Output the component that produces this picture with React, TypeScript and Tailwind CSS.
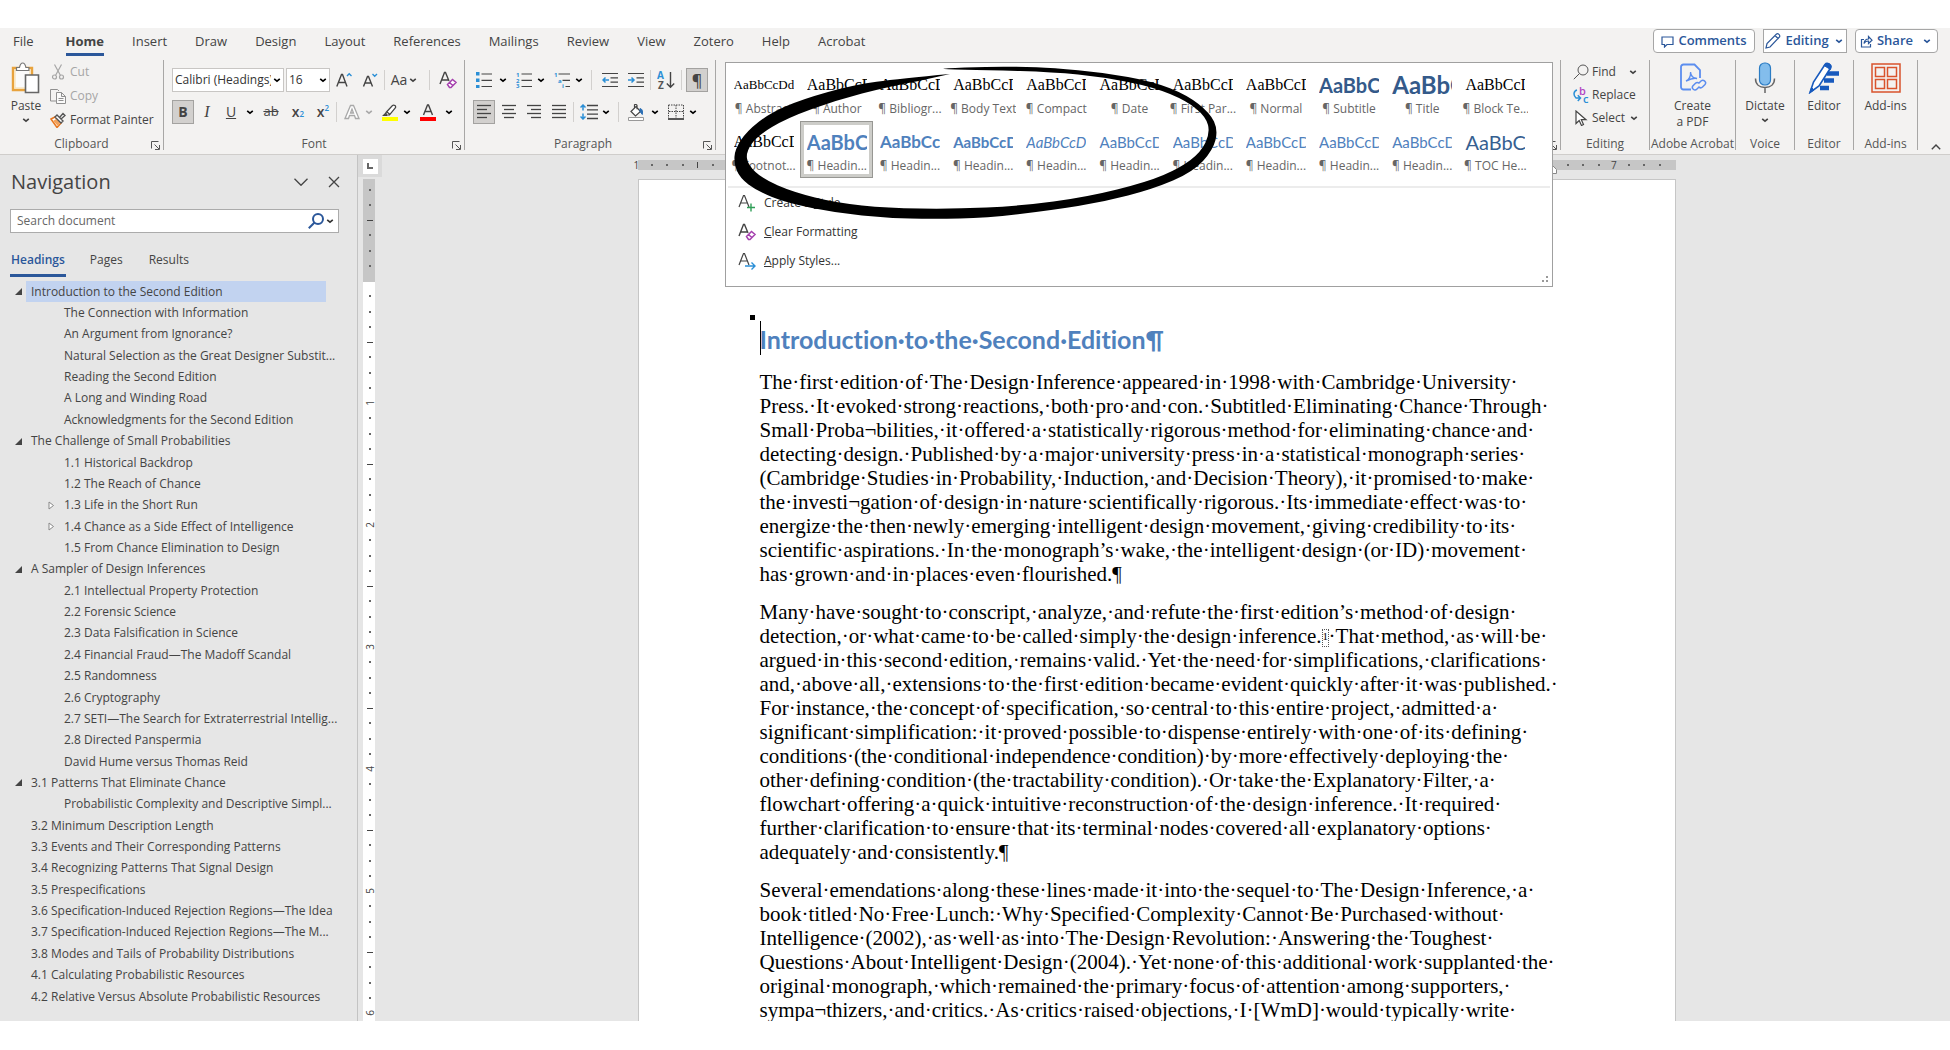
import React from "react";

type IconProps = { className?: string };

function Chevron({ className = "" }: IconProps) {
  return (
    <svg viewBox="0 0 12 12" className={"h-3 w-3 shrink-0 " + className} fill="none" stroke="currentColor" strokeWidth="1.6">
      <path d="M3.2 4.8 6 7.2l2.8-2.4" />
    </svg>
  );
}

function Launcher() {
  return (
    <svg viewBox="0 0 9 9" className="h-[9px] w-[9px]" fill="none" stroke="#555" strokeWidth="1">
      <path d="M.5 7.5v-7h7M3.5 3.5l4.5 4.5M8.5 4v4.5H4" />
    </svg>
  );
}

function Svg({ children, className = "h-4 w-4", box = "0 0 16 16" }: { children: React.ReactNode; className?: string; box?: string }) {
  return (
    <svg viewBox={box} className={"shrink-0 " + className} fill="none" stroke="#444" strokeWidth="1">
      {children}
    </svg>
  );
}

const PasteIcon = () => (
  <Svg box="0 0 30 32" className="h-8 w-[30px]">
    <path d="M2 6h19v22H2z" fill="#fff" stroke="#e8a33d" strokeWidth="2.4" />
    <path d="M4 8h15v18H4z" fill="#fbfbfb" stroke="#f7dca8" />
    <path d="M5.5 8.500V5.500h3C9 3 10 1 11.700 1s2.700 2 3.200 4.500h3v3z" fill="#fff" stroke="#777" strokeWidth="1.200" />
    <path d="M14.500 13h13v17.500h-13z" fill="#fff" stroke="#666" strokeWidth="1.600" />
  </Svg>
);

const CutIcon = () => (
  <Svg>
    <g stroke="#a6a6a6" strokeWidth="1.2">
      <path d="M4.500.5l6 11M11.500.5l-6 11" />
      <circle cx="4.500" cy="13" r="2" />
      <circle cx="11.500" cy="13" r="2" />
    </g>
  </Svg>
);

const CopyIcon = () => (
  <Svg>
    <g stroke="#8f8f8f">
      <path d="M6 13H.5V1.500h7L9 3" />
      <path d="M6.500 4.500h5l4 4v7h-9zM11.500 4.500v4h4M8.500 10.500h5M8.500 12.500h5" fill="#fafafa" />
    </g>
  </Svg>
);

const PainterIcon = () => (
  <Svg>
    <path d="M1 7l4-2 6 6-4 4.500z" fill="#fff" stroke="#e8761e" strokeWidth="1.500" />
    <path d="M3 9l5 5 2-3-4-4z" fill="#f2a25c" stroke="none" />
    <path d="M5 5l2-2 6 6-2 2zM9.500 5.500 13 1.500 15 3.500 11 7" fill="#fff" stroke="#555" strokeWidth="1.400" />
  </Svg>
);

const EraserA = () => (
  <Svg className="h-[18px] w-[18px]" box="0 0 18 18">
    <path d="M1 13 5.500 1.500h1L10 10M2.800 9H9" strokeWidth="1.400" />
    <path d="M8.500 13.500l5-5 3.500 3-5 5h-1.500zM10.500 11.500l3.500 3.300" fill="#fff" stroke="#a540ae" strokeWidth="1.500" />
  </Svg>
);

const Lines = ({ rows }: { rows: [number, number][] }) => (
  <Svg>
    {rows.map(([a, b], i) => (
      <path key={i} d={`M${a} ${1.5 + i * 4}H${b}`} strokeWidth="1.300" />
    ))}
  </Svg>
);

const BulletsIcon = () => (
  <Svg>
    <path d="M0 0h3.500v3.500H0zM0 6.500h3.500V10H0zM0 13h3.500v3H0z" fill="#2b8fd6" stroke="none" />
    <path d="M5.500 2H16M5.500 8.300H16M5.500 14.500H16" strokeWidth="1.200" />
  </Svg>
);

const NumberingIcon = () => (
  <Svg>
    <g fill="#2b8fd6" stroke="none" fontSize="6" fontWeight="700" fontFamily="Open Sans">
      <text x="0" y="5">1</text>
      <text x="0" y="10.500">2</text>
      <text x="0" y="16">3</text>
    </g>
    <path d="M5.500 2H16M5.500 8.300H16M5.500 14.500H16" strokeWidth="1.200" />
  </Svg>
);

const MultilevelIcon = () => (
  <Svg>
    <g fill="#2b8fd6" stroke="none" fontSize="6" fontWeight="700" fontFamily="Open Sans">
      <text x="0" y="5">1</text>
      <text x="4" y="10.500">a</text>
      <text x="8" y="16">i</text>
    </g>
    <path d="M4.500 2H16M8.500 8.300H16M11.500 14.500H16" strokeWidth="1.200" />
  </Svg>
);

const IndentIcon = ({ right }: { right?: boolean }) => (
  <Svg>
    <path d="M0 1.500h16M8.500 5.800H16M8.500 10.200H16M0 14.500h16" strokeWidth="1.200" />
    <path d={right ? "M0 8h6M3.500 5.500 6 8l-2.500 2.500" : "M1 8h6M3.500 5.500 1 8l2.500 2.500"} stroke="#2b8fd6" strokeWidth="1.500" />
  </Svg>
);

const SortIcon = () => (
  <Svg className="h-[18px] w-[18px]" box="0 0 18 18">
    <g stroke="none" fontSize="10" fontWeight="700" fontFamily="Open Sans">
      <text x="0" y="8" fill="#2b8fd6">A</text>
      <text x="1" y="17.500" fill="#555">Z</text>
    </g>
    <path d="M13.500 1v15M9.800 12.500l3.700 3.700 3.700-3.700" strokeWidth="1.400" />
  </Svg>
);

const SpacingIcon = () => (
  <Svg className="h-4 w-[18px]" box="0 0 18 16">
    <path d="M7 1.500h11M7 5.800h11M7 10.200h11M7 14.500h11" strokeWidth="1.300" />
    <path d="M3 1v5.500M.5 3.500 3 1l2.500 2.500M3 9.500V15M.5 12.500 3 15l2.500-2.500" stroke="#2b8fd6" strokeWidth="1.500" />
  </Svg>
);

const ShadingIcon = () => (
  <Svg className="h-[17px] w-4" box="0 0 16 17">
    <path d="M3 7.500 8 2.500l4.500 5L7.500 12zM6.500 4V.8c1-.6 2-.4 2.500.5v4" fill="#fff" strokeWidth="1.200" />
    <path d="M12 4.500c2 .5 3 2 2.300 6l-2.300-3z" fill="#2b6fb5" stroke="#2b6fb5" />
    <path d="M.5 13.500h15v3H.5z" fill="#fff" stroke="#999" />
  </Svg>
);

const BordersIcon = () => (
  <Svg>
    <path d="M.5 1h15M.5 1v13M15.500 1v13M8 1v13M1 7.500h14" strokeDasharray="1.500 1" />
    <path d="M0 15h16" strokeWidth="1.800" />
  </Svg>
);

const HighlightIcon = () => (
  <Svg className="h-[17px] w-4" box="0 0 16 17">
    <path d="M4 8.500 10.500 1.500c1.500-1.300 4 .6 2.800 2.500L7.500 11H4zM5 8l3 2.500M4 9l-2.500 2.500h3z" fill="#fff" strokeWidth="1.200" />
    <path d="M0 13h16v4H0z" fill="#ff0" stroke="none" />
  </Svg>
);

const FontColorIcon = () => (
  <Svg className="h-[17px] w-4" box="0 0 16 17">
    <path d="M3.500 11 7.500 1h1l4 10M5 7.500h6" strokeWidth="1.400" />
    <path d="M0 13h16v4H0z" fill="#f00" stroke="none" />
  </Svg>
);

const OutlineA = () => (
  <Svg>
    <path d="M1 14.500 6.500 1.500h3l5.500 13h-3.500L10.500 11.500h-5L4.500 14.500zM6.500 9h3L8 5z" fill="#fff" stroke="#a9a9a9" strokeWidth="1.300" />
  </Svg>
);

const SearchIcon = ({ className = "" }: IconProps) => (
  <svg viewBox="0 0 16 16" className={"h-4 w-4 shrink-0 " + className} fill="none" stroke="currentColor">
    <circle cx="10" cy="6" r="5" />
    <path d="M6.500 9.500.8 15.200" />
  </svg>
);

const ReplaceIcon = () => (
  <Svg>
    <g stroke="none" fontSize="11" fontWeight="600" fontFamily="Open Sans">
      <text x="6" y="8" fill="#b146c2">b</text>
      <text x="10" y="16" fill="#2b8fd6">c</text>
    </g>
    <path d="M4 3C.5 4 0 8.500 3 11h4M4.800 8.300 7.500 11l-2.700 3" stroke="#2b8fd6" strokeWidth="1.500" />
  </Svg>
);

const SelectIcon = () => (
  <Svg>
    <path d="M3 1v12.500l3.200-3 2.300 5 2-1-2.200-4.800H13z" fill="#fff" strokeWidth="1.200" />
  </Svg>
);

const PdfIcon = () => (
  <Svg box="0 0 28 30" className="h-[30px] w-7">
    <g stroke="#5b8def" strokeWidth="1.800">
      <path d="M12 26.500H4.500c-1.500 0-2.500-1-2.500-2.500V4c0-1.500 1-2.500 2.500-2.500h11L21 7v8" />
      <path d="M7 18c3-1 5-5 4.500-9 0 4 3 6.500 6.500 6.500-4-1-7 .5-11 2.500z" strokeWidth="1.400" />
      <path d="M19.500 20.500l2.500-2.500c2.500-2 6 1 4 3.500L23.500 24c-1 1-2.500 1-3.500.2M20.500 23.500 18 26c-2.500 2.500-6-.8-4-3.200l2.500-2.500c1-1 2.500-1 3.500 0" strokeWidth="1.500" />
    </g>
  </Svg>
);

const MicIcon = () => (
  <Svg box="0 0 22 32" className="h-8 w-[22px]">
    <rect x="5.500" y="1" width="11" height="22" rx="5" fill="#83bdec" stroke="#2b7cc4" strokeWidth="1.200" />
    <path d="M1.500 16.500c0 6 4 9 9.500 9s9.500-3 9.500-9M11 25.500V31" stroke="#666" strokeWidth="1.500" />
  </Svg>
);

const EditorIcon = () => (
  <Svg box="0 0 32 32" className="h-8 w-8">
    <path d="M19 11.500h12M16 18.500h10M12 26h9" stroke="#185abd" strokeWidth="4.500" />
    <path d="M2 30.500 5.500 20 17 2.500c2-2.500 7 0 5.500 3.500L11 24z" fill="#fff" stroke="#185abd" strokeWidth="1.600" />
    <path d="M16 3.500l6.500 4 .6-3.500c-1-3-5-3.500-7.100-.5zM2 30.500l1.500-5 2.500 2.500z" fill="#185abd" stroke="#185abd" />
  </Svg>
);

const AddinsIcon = () => (
  <Svg box="0 0 30 30" className="h-[30px] w-[30px]">
    <g stroke="#d9532c" strokeWidth="1.500">
      <path d="M1 1h28v28H1zM4.500 4.500h9v9h-9zM16.500 4.500h9v9h-9zM4.500 16.500h9v9h-9zM16.500 16.500h9v9h-9z" />
    </g>
  </Svg>
);

function Tool({ label, className = "w-[26px]", active, children }: { label: string; className?: string; active?: boolean; children: React.ReactNode }) {
  return (
    <button
      aria-label={label}
      className={
        "flex h-6 shrink-0 items-center justify-center text-[#444] " +
        (active ? "border border-[#a3a2a0] bg-[#d2d0ce] " : "") +
        className
      }
    >
      {children}
    </button>
  );
}

const Sep = ({ className = "" }: IconProps) => <span className={"h-5 w-px shrink-0 bg-[#d2d0ce] " + className} />;

function Group({ name, className, launcher, children }: { name: string; className: string; launcher?: boolean; children: React.ReactNode }) {
  return (
    <section aria-label={name} className={"relative flex h-[90px] shrink-0 flex-col border-r border-[#a8a7a6] " + className}>
      <div className="flex-1">{children}</div>
      <div className="-mb-0.5 flex h-4 items-center justify-center text-xs leading-4 whitespace-nowrap text-[#555]">{name}</div>
      {launcher && (
        <button aria-label={name + " settings"} className="absolute right-[3px] bottom-0">
          <Launcher />
        </button>
      )}
    </section>
  );
}

function BigButton({ icon, label, chevron, className = "" }: { icon: React.ReactNode; label: string; chevron?: boolean; className?: string }) {
  return (
    <button className={"flex flex-col items-center text-xs leading-4 text-[#444] " + className}>
      <span className="flex h-9 items-center">{icon}</span>
      <span className="mt-0.5 whitespace-pre-line">{label}</span>
      {chevron && <Chevron />}
    </button>
  );
}

const tabs = ["File", "Home", "Insert", "Draw", "Design", "Layout", "References", "Mailings", "Review", "View", "Zotero", "Help", "Acrobat"];

const serif = "font-['Liberation_Serif',serif] text-base text-black";
const blue = "font-['Lato',sans-serif] text-[#4f81bd] ";
const styleCells: { name: string; look: string; active?: boolean }[] = [
  { name: "Abstract", look: "font-['Liberation_Serif',serif] text-[13px] text-black" },
  { name: "Author", look: serif },
  { name: "Bibliogr...", look: serif },
  { name: "Body Text", look: serif },
  { name: "Compact", look: serif },
  { name: "Date", look: serif },
  { name: "First Par...", look: serif },
  { name: "Normal", look: serif },
  { name: "Subtitle", look: "font-['Lato',sans-serif] text-xl font-bold text-[#345a8a]" },
  { name: "Title", look: "font-['Lato',sans-serif] text-2xl font-bold text-[#345a8a]" },
  { name: "Block Te...", look: serif },
  { name: "Footnot...", look: serif },
  { name: "Headin...", look: blue + "text-xl font-bold", active: true },
  { name: "Headin...", look: blue + "text-[17px] font-bold" },
  { name: "Headin...", look: blue + "text-[15px] font-bold" },
  { name: "Headin...", look: blue + "text-[15px] italic" },
  { name: "Headin...", look: blue + "text-[15px]" },
  { name: "Headin...", look: blue + "text-[15px]" },
  { name: "Headin...", look: blue + "text-[15px]" },
  { name: "Headin...", look: blue + "text-[15px]" },
  { name: "Headin...", look: blue + "text-[15px]" },
  { name: "TOC He...", look: "font-['Lato',sans-serif] text-xl text-[#365f91]" },
];

type Pt = [number, number];
const loop: Pt[] = [
  [950, 74], [900, 78.5], [853, 85], [803, 99], [770, 113], [747, 131], [735, 149], [734, 164], [740, 178], [757, 191],
  [787, 203], [837, 213], [887, 218], [933, 219], [987, 218], [1053, 210], [1103, 202], [1153, 189], [1193, 172], [1213, 150],
  [1218, 130], [1210, 113], [1187, 95], [1153, 81.5], [1103, 72.5], [1053, 68], [1020, 66.7], [987, 66.7], [943, 68.3], [943, 69.3],
  [987, 70], [1053, 72], [1103, 77], [1153, 87], [1187, 101], [1206, 117], [1210, 133], [1201, 152], [1180, 168], [1147, 182],
  [1087, 197], [1020, 206], [953, 209], [887, 208], [837, 203], [793, 192], [763, 179], [748, 165], [746, 152], [757, 136],
  [787, 118], [837, 100], [887, 87], [950, 75],
];

function smooth(points: Pt[]) {
  let d = `M${points[0][0]} ${points[0][1]}`;
  for (let i = 1; i < points.length - 1; i++) {
    const [x, y] = points[i];
    const [nx, ny] = points[i + 1];
    d += ` Q${x} ${y} ${(x + nx) / 2} ${(y + ny) / 2}`;
  }
  return d + "Z";
}

function StylesMenu() {
  return (
    <div className="absolute top-0.5 right-[7px] left-[9px] z-10 h-[225px] border border-[#a0a0a0] bg-white">
      <div className="grid grid-cols-11 pt-px pr-5 pl-px">
        {styleCells.map((s, i) => (
          <button
            key={i}
            className={
              "flex h-[57px] flex-col items-center overflow-hidden " +
              (s.active ? "border border-[#979793] outline-[3px] -outline-offset-4 outline-[#cdcdc9]" : "border border-transparent")
            }
          >
            <span className={"mt-1 flex h-8 w-[60px] items-center overflow-hidden whitespace-nowrap " + s.look}>AaBbCcDd</span>
            <span className="w-[66px] overflow-hidden text-center text-xs leading-4 whitespace-nowrap text-[#666]">¶ {s.name}</span>
          </button>
        ))}
      </div>
      <div className="mx-0.5 mt-2 h-0.5 bg-[#ececec]" />
      <div className="flex flex-col pl-3 text-xs text-[#333]">
        <button className="flex h-[29px] items-center gap-2">
          <Svg box="0 0 18 18" className="h-[18px] w-[18px]">
            <path d="M1 13 5.500 1.500h1L11 13M2.800 9H9" strokeWidth="1.200" />
            <path d="M13 9.500v8M9 13.500h8" stroke="#2f9e57" strokeWidth="1.400" />
          </Svg>
          <span>Create a <u>S</u>tyle</span>
        </button>
        <button className="flex h-[29px] items-center gap-2">
          <EraserA />
          <span><u>C</u>lear Formatting</span>
        </button>
        <button className="flex h-[29px] items-center gap-2">
          <Svg box="0 0 18 18" className="h-[18px] w-[18px]">
            <path d="M1 13 5.500 1.500h1L11 13M2.800 9H9" strokeWidth="1.200" />
            <path d="M7 14h10M13.500 10.500 17 14l-3.500 3.500" stroke="#2b8fd6" strokeWidth="1.400" />
          </Svg>
          <span><u>A</u>pply Styles...</span>
        </button>
      </div>
      <svg viewBox="0 0 6 6" className="absolute right-1 bottom-1 h-1.5 w-1.5" fill="#999">
        <path d="M4 0h2v2H4zM4 4h2v2H4zM0 4h2v2H0z" />
      </svg>
      <svg viewBox="726 63 500 160" className="pointer-events-none absolute top-0 left-0 h-40 w-[500px]" fill="#000">
        <path d={smooth(loop)} />
      </svg>
    </div>
  );
}

function Ribbon() {
  return (
    <header className="border-b border-[#cfcdcb] bg-[#f3f2f1]">
      <div className="flex h-8 items-start justify-between pr-3 pl-[13px]">
        <nav className="flex gap-7 pt-px text-[13px] leading-6 text-[#444]">
          {tabs.map((t) => (
            <a key={t} href="#" className={t === "Home" ? "ml-1 border-b-3 border-[#2b579a] font-bold" : ""}>
              {t}
            </a>
          ))}
        </nav>
        <div className="flex gap-2 pt-px text-[13px] font-semibold text-[#2b579a]">
          <button className="flex h-6 w-[102px] items-center justify-center gap-1 rounded border border-[#a6a6a6] bg-white">
            <svg viewBox="0 0 13 13" className="h-[13px] w-[13px]" fill="none" stroke="currentColor" strokeWidth="1.200">
              <path d="M1 2h11v7.500H6L3.500 12V9.500H1z" />
            </svg>
            Comments
          </button>
          <button className="flex h-6 w-[84px] items-center justify-center gap-1 border border-[#a6a6a6] bg-white">
            <svg viewBox="0 0 16 16" className="h-4 w-4" fill="none" stroke="currentColor" strokeWidth="1.200">
              <path d="M1 15l1-4.500L11.500 1c1.500-1 4 1 3 3L5 14zM10 2.500l3.500 3.500" />
            </svg>
            Editing
            <Chevron />
          </button>
          <button className="flex h-6 w-[83px] items-center justify-center gap-1 rounded border border-[#a6a6a6] bg-white">
            <svg viewBox="0 0 13 13" className="h-[13px] w-[13px]" fill="none" stroke="currentColor" strokeWidth="1.200">
              <path d="M4 4.500H1.500v7.500h9V9M4 8.500C4.500 5 6 4 8.500 4V1.500L12 5.200 8.500 8.500V6C6.500 6 5 6.500 4 8.500z" />
            </svg>
            Share
            <Chevron className="ml-1" />
          </button>
        </div>
      </div>

      <div className="flex pb-1">
        <Group name="Clipboard" className="w-[164px]" launcher>
          <div className="flex pl-2.5">
            <BigButton icon={<PasteIcon />} label="Paste" chevron className="w-8" />
            <div className="flex flex-col pl-2 text-xs text-[#444]">
              <button className="flex h-6 items-center gap-1 text-[#a6a6a6]"><CutIcon />Cut</button>
              <button className="flex h-6 items-center gap-1 text-[#a6a6a6]"><CopyIcon />Copy</button>
              <button className="flex h-6 items-center gap-1 whitespace-nowrap"><PainterIcon />Format Painter</button>
            </div>
          </div>
        </Group>

        <Group name="Font" className="w-[301px]" launcher>
          <div className="flex items-center gap-0.5 pt-2 pl-2">
            <label className="relative flex h-6 w-28 shrink-0 items-center border border-[#c8c6c4] bg-white">
              <select aria-label="Font name" className="w-[98px] appearance-none overflow-hidden pl-0.5 text-xs text-[#333] outline-none">
                <option>Calibri (Headings)</option>
              </select>
              <Chevron className="absolute right-0" />
            </label>
            <label className="relative flex h-6 w-11 shrink-0 items-center border border-[#c8c6c4] bg-white">
              <select aria-label="Font size" className="w-7 appearance-none pl-0.5 text-xs text-[#333] outline-none">
                <option>16</option>
              </select>
              <Chevron className="absolute right-0" />
            </label>
            <Tool label="Grow font" className="w-6">
              <Svg>
                <path d="M.8 14.500 5.500 2.500h1L11 14.500M2.500 10.500H9.500" strokeWidth="1.400" />
                <path d="M11 4l2.200-2.200L15.500 4" stroke="#2b8fd6" strokeWidth="1.400" />
              </Svg>
            </Tool>
            <Tool label="Shrink font" className="w-6">
              <Svg>
                <path d="M1.500 14.500 5.500 4.500h1l4 10M3 11h6" strokeWidth="1.400" />
                <path d="M10.500 2l2.200 2.200L15 2" stroke="#2b8fd6" strokeWidth="1.400" />
              </Svg>
            </Tool>
            <Sep />
            <Tool label="Change case" className="w-9 text-sm">Aa<Chevron /></Tool>
            <Sep className="mx-1" />
            <Tool label="Clear formatting" className="w-6"><EraserA /></Tool>
          </div>
          <div className="flex items-center gap-0.5 pt-2 pl-2">
            <Tool label="Bold" active className="w-[22px] text-sm font-bold">B</Tool>
            <Tool label="Italic" className="w-[22px] font-['Liberation_Serif',serif] text-base italic">I</Tool>
            <Tool label="Underline" className="w-[22px] text-sm underline">U</Tool>
            <Chevron />
            <Tool label="Strikethrough" className="w-[26px] text-[13px] line-through">ab</Tool>
            <Tool label="Subscript" className="w-6 text-sm font-semibold">x<sub className="text-[8px] text-[#2b8fd6]">2</sub></Tool>
            <Tool label="Superscript" className="w-[22px] text-sm font-semibold">x<sup className="text-[8px] text-[#2b8fd6]">2</sup></Tool>
            <Sep />
            <Tool label="Text effects"><OutlineA /></Tool>
            <Chevron className="-ml-1 text-[#a9a9a9]" />
            <Tool label="Highlight"><HighlightIcon /></Tool>
            <Chevron className="-ml-1" />
            <Tool label="Font color"><FontColorIcon /></Tool>
            <Chevron />
          </div>
        </Group>

        <Group name="Paragraph" className="w-[251px] pr-3.5" launcher>
          <div className="flex items-center gap-0.5 pt-2 pl-2">
            <Tool label="Bullets" className="w-[22px]"><BulletsIcon /></Tool>
            <Chevron />
            <Tool label="Numbering"><NumberingIcon /></Tool>
            <Chevron className="-ml-1" />
            <Tool label="Multilevel list"><MultilevelIcon /></Tool>
            <Chevron className="-ml-1" />
            <Sep className="mx-1" />
            <Tool label="Decrease indent" className="w-6"><IndentIcon /></Tool>
            <Tool label="Increase indent" className="w-6"><IndentIcon right /></Tool>
            <Sep />
            <Tool label="Sort"><SortIcon /></Tool>
            <Sep className="mr-0.5" />
            <Tool label="Show marks" active className="w-[22px] text-base font-semibold">¶</Tool>
          </div>
          <div className="flex items-center gap-0.5 pt-2 pl-2">
            <Tool label="Align left" active className="w-[22px]"><Lines rows={[[1, 15], [1, 11], [1, 15], [1, 11]]} /></Tool>
            <Tool label="Center" className="w-6"><Lines rows={[[1, 15], [3, 13], [1, 15], [3, 13]]} /></Tool>
            <Tool label="Align right" className="w-[22px]"><Lines rows={[[1, 15], [5, 15], [1, 15], [5, 15]]} /></Tool>
            <Tool label="Justify" className="w-6"><Lines rows={[[1, 15], [1, 15], [1, 15], [1, 15]]} /></Tool>
            <Sep />
            <Tool label="Line spacing"><SpacingIcon /></Tool>
            <Chevron className="-ml-1" />
            <Sep className="mx-1" />
            <Tool label="Shading" className="w-[22px]"><ShadingIcon /></Tool>
            <Chevron />
            <Tool label="Borders"><BordersIcon /></Tool>
            <Chevron className="-ml-1" />
          </div>
        </Group>

        <section aria-label="Styles" className="relative min-w-0 flex-1 border-r border-[#a8a7a6]">
          <StylesMenu />
          <button aria-label="Styles settings" className="absolute right-[3px] bottom-0"><Launcher /></button>
        </section>

        <Group name="Editing" className="w-[89px]">
          <div className="flex flex-col pl-3 text-xs text-[#444]">
            <button className="flex h-[23px] items-center gap-[3px]"><SearchIcon className="text-[#555]" />Find<Chevron className="ml-2" /></button>
            <button className="flex h-[23px] items-center gap-[3px]"><ReplaceIcon />Replace</button>
            <button className="flex h-[23px] items-center gap-[3px]"><SelectIcon />Select<Chevron /></button>
          </div>
        </Group>
        <Group name="Adobe Acrobat" className="w-[86px]">
          <BigButton icon={<PdfIcon />} label={"Create\na PDF"} className="w-full" />
        </Group>
        <Group name="Voice" className="w-[59px]">
          <BigButton icon={<MicIcon />} label="Dictate" chevron className="w-full" />
        </Group>
        <Group name="Editor" className="w-[59px]">
          <BigButton icon={<EditorIcon />} label="Editor" className="w-full" />
        </Group>
        <Group name="Add-ins" className="w-16">
          <BigButton icon={<AddinsIcon />} label="Add-ins" className="w-full" />
        </Group>
        <div className="flex w-8 shrink-0 items-end justify-center pl-1">
          <button aria-label="Collapse ribbon">
            <svg viewBox="0 0 10 6" className="h-1.5 w-2.5" fill="none" stroke="#444" strokeWidth="1.400"><path d="M.8 5.200 5 1l4.200 4.200" /></svg>
          </button>
        </div>
      </div>
    </header>
  );
}

type Item = [level: 1 | 2, text: string, mark?: "open" | "closed"];
const outline: Item[] = [
  [1, "Introduction to the Second Edition", "open"],
  [2, "The Connection with Information"],
  [2, "An Argument from Ignorance?"],
  [2, "Natural Selection as the Great Designer Substit..."],
  [2, "Reading the Second Edition"],
  [2, "A Long and Winding Road"],
  [2, "Acknowledgments for the Second Edition"],
  [1, "The Challenge of Small Probabilities", "open"],
  [2, "1.1 Historical Backdrop"],
  [2, "1.2 The Reach of Chance"],
  [2, "1.3 Life in the Short Run", "closed"],
  [2, "1.4 Chance as a Side Effect of Intelligence", "closed"],
  [2, "1.5 From Chance Elimination to Design"],
  [1, "A Sampler of Design Inferences", "open"],
  [2, "2.1 Intellectual Property Protection"],
  [2, "2.2 Forensic Science"],
  [2, "2.3 Data Falsification in Science"],
  [2, "2.4 Financial Fraud—The Madoff Scandal"],
  [2, "2.5 Randomness"],
  [2, "2.6 Cryptography"],
  [2, "2.7 SETI—The Search for Extraterrestrial Intellig..."],
  [2, "2.8 Directed Panspermia"],
  [2, "David Hume versus Thomas Reid"],
  [1, "3.1 Patterns That Eliminate Chance", "open"],
  [2, "Probabilistic Complexity and Descriptive Simpl..."],
  [1, "3.2 Minimum Description Length"],
  [1, "3.3 Events and Their Corresponding Patterns"],
  [1, "3.4 Recognizing Patterns That Signal Design"],
  [1, "3.5 Prespecifications"],
  [1, "3.6 Specification-Induced Rejection Regions—The Idea"],
  [1, "3.7 Specification-Induced Rejection Regions—The M..."],
  [1, "3.8 Modes and Tails of Probability Distributions"],
  [1, "4.1 Calculating Probabilistic Resources"],
  [1, "4.2 Relative Versus Absolute Probabilistic Resources"],
];

function Navigation() {
  return (
    <aside className="flex w-[358px] shrink-0 flex-col border-r border-[#c3c3c3] pb-3.5 text-[#444]">
      <div className="flex items-center justify-between pt-[11px] pr-[17px] pl-[11px]">
        <h2 className="text-xl leading-8">Navigation</h2>
        <div className="flex items-center gap-5">
          <button aria-label="Pane options">
            <svg viewBox="0 0 14 8" className="h-2 w-3.5" fill="none" stroke="#444" strokeWidth="1.300"><path d="M.5.8 7 7.300 13.500.8" /></svg>
          </button>
          <button aria-label="Close pane">
            <svg viewBox="0 0 12 12" className="h-3 w-3" fill="none" stroke="#444" strokeWidth="1.300"><path d="M1 1l10 10M11 1 1 11" /></svg>
          </button>
        </div>
      </div>
      <div className="mt-[11px] mr-[18px] ml-2.5 flex h-6 items-center border border-[#ababab] bg-white pr-0.5">
        <input aria-label="Search document" placeholder="Search document" className="min-w-0 flex-1 px-1.5 text-xs outline-none placeholder:text-[#666]" />
        <button aria-label="Search" className="flex items-center text-[#2b579a]">
          <SearchIcon className="stroke-2" />
          <Chevron className="text-[#333]" />
        </button>
      </div>
      <div className="mt-[17px] flex gap-6 pl-2.5 text-xs leading-5">
        <button className="border-b-3 border-[#2b579a] px-px pb-1 font-semibold text-[#2b579a]">Headings</button>
        <button className="pb-[7px]">Pages</button>
        <button className="pb-[7px] pl-0.5">Results</button>
      </div>
      <ul className="mt-1 flex min-h-0 flex-1 flex-col text-xs whitespace-nowrap">
        {outline.map(([level, text, mark], i) => (
          <li key={i} className="flex flex-1 items-stretch pr-[31px]">
            <span className={"flex shrink-0 items-center " + (level === 1 ? "w-[26px] pl-[15px]" : "w-[59px] pl-12")}>
              {mark === "open" && <svg viewBox="0 0 7 7" className="h-[7px] w-[7px]" fill="#444"><path d="M7 0v7H0z" /></svg>}
              {mark === "closed" && <svg viewBox="0 0 7 9" className="h-[9px] w-[7px]" fill="#fff" stroke="#888"><path d="M1 1l4.500 3.500L1 8z" /></svg>}
            </span>
            <a href="#" className={"flex min-w-0 flex-1 items-center pl-[5px] " + (i === 0 ? "bg-[#c2d3f0]" : "")}>{text}</a>
          </li>
        ))}
      </ul>
    </aside>
  );
}

const Mark = ({ n, vertical }: { n: number; vertical?: boolean }) => {
  if (n === 0) return null;
  if (n % 8 === 0) return <span className={"text-[10px] leading-none " + (vertical ? "-rotate-90" : "")}>{Math.abs(n / 8)}</span>;
  if (n % 4 === 0) return <span className={vertical ? "h-px w-1.5 bg-[#444]" : "h-1.5 w-px bg-[#444]"} />;
  return <span className="h-0.5 w-0.5 bg-[#666]" />;
};

function VerticalRuler() {
  return (
    <div className="flex w-6 shrink-0 flex-col text-[#444]">
      <div className="flex h-[22px] w-6 items-center justify-center bg-[#dadada]">
        <span className="flex h-[15px] w-[15px] items-center justify-center bg-white">
          <span className="h-1.5 w-1.5 border-b-2 border-l-2 border-[#666]" />
        </span>
      </div>
      <div className="mt-0.5 ml-[5px] flex w-3 flex-1 flex-col bg-[linear-gradient(#c6c6c6_0_103px,#fff_103px)] pt-[3px] pl-0.5">
        {Array.from({ length: 55 }, (_, i) => (
          <span key={i} className="flex min-h-0 flex-1 items-center justify-center">
            <Mark n={i - 6} vertical />
          </span>
        ))}
      </div>
    </div>
  );
}

const paragraphs: string[][] = [
  [
    "The first edition of The Design Inference appeared in 1998 with Cambridge University ",
    "Press. It evoked strong reactions, both pro and con. Subtitled Eliminating Chance Through ",
    "Small Proba¬bilities, it offered a statistically rigorous method for eliminating chance and ",
    "detecting design. Published by a major university press in a statistical monograph series ",
    "(Cambridge Studies in Probability, Induction, and Decision Theory), it promised to make ",
    "the investi¬gation of design in nature scientifically rigorous. Its immediate effect was to ",
    "energize the then newly emerging intelligent design movement, giving credibility to its ",
    "scientific aspirations. In the monograph’s wake, the intelligent design (or ID) movement ",
    "has grown and in places even flourished.¶",
  ],
  [
    "Many have sought to conscript, analyze, and refute the first edition’s method of design ",
    "detection, or what came to be called simply the design inference.^ That method, as will be ",
    "argued in this second edition, remains valid. Yet the need for simplifications, clarifications ",
    "and, above all, extensions to the first edition became evident quickly after it was published. ",
    "For instance, the concept of specification, so central to this entire project, admitted a ",
    "significant simplification: it proved possible to dispense entirely with one of its defining ",
    "conditions (the conditional independence condition) by more effectively deploying the ",
    "other defining condition (the tractability condition). Or take the Explanatory Filter, a ",
    "flowchart offering a quick intuitive reconstruction of the design inference. It required ",
    "further clarification to ensure that its terminal nodes covered all explanatory options ",
    "adequately and consistently.¶",
  ],
  [
    "Several emendations along these lines made it into the sequel to The Design Inference, a ",
    "book titled No Free Lunch: Why Specified Complexity Cannot Be Purchased without ",
    "Intelligence (2002), as well as into The Design Revolution: Answering the Toughest ",
    "Questions About Intelligent Design (2004). Yet none of this additional work supplanted the ",
    "original monograph, which remained the primary focus of attention among supporters, ",
    "sympa¬thizers, and critics. As critics raised objections, I [WmD] would typically write ",
  ],
];

const dotted = (s: string) => s.replace(/ /g, "·");

function Line({ text }: { text: string }) {
  const [before, after] = text.split("^");
  return (
    <span className="block h-6 whitespace-nowrap">
      {dotted(before)}
      {after !== undefined && (
        <>
          <span className="inline-block h-[18px] w-[7px] border border-dotted border-[#555] text-center align-middle text-[11px] leading-3">1</span>
          {dotted(after)}
        </>
      )}
    </span>
  );
}

function Document() {
  return (
    <main className="flex min-w-0 flex-1 flex-col items-center overflow-hidden pr-[19px]">
      <div className="mt-[5px] flex h-2.5 w-[1038px] shrink-0 bg-[linear-gradient(90deg,#c6c6c6_0_123px,#fff_123px_915px,#c6c6c6_915px)] pr-2 text-[#444]">
        <span className="-ml-1 flex w-[11px] items-center text-[10px] leading-none">1</span>
        {Array.from({ length: 67 }, (_, i) => (
          <span key={i} className="flex min-w-0 flex-1 items-center justify-center">
            {i - 7 === 52 ? (
              <svg viewBox="0 0 9 9" className="mt-2 h-[9px] w-[9px] shrink-0" fill="#fff" stroke="#888"><path d="M.5 8.500v-4l4-4 4 4v4z" /></svg>
            ) : (
              <Mark n={i - 7} />
            )}
          </span>
        ))}
      </div>
      <article className="mt-[9px] w-[1038px] flex-1 border border-b-0 border-[#c6c6c6] bg-white pt-[135px] pl-[121px] font-['Liberation_Serif',serif] text-[21px] leading-6 text-black">
        <div className="relative">
          <span className="absolute top-0 -left-2.5 h-[5px] w-[5px] bg-black" />
          <span className="absolute top-1.5 left-0 h-[34px] w-px bg-black" />
          <h1 className="pt-2 font-['Lato',sans-serif] text-[25px] leading-8 font-bold whitespace-nowrap text-[#4f81bd] [font-variant-ligatures:none]">
            Introduction·to·the·Second·Edition¶
          </h1>
        </div>
        <div className="mt-[15px] flex flex-col gap-3.5">
          {paragraphs.map((p, i) => (
            <p key={i}>
              {p.map((l) => (
                <Line key={l} text={l} />
              ))}
            </p>
          ))}
        </div>
      </article>
    </main>
  );
}

export default function App() {
  return (
    <div className="h-screen bg-white pt-7 pb-[29px] font-['Open_Sans',sans-serif]">
      <div className="flex h-full flex-col overflow-hidden bg-[#e6e6e6]">
        <Ribbon />
        <div className="flex min-h-0 flex-1">
          <Navigation />
          <VerticalRuler />
          <Document />
        </div>
      </div>
    </div>
  );
}
